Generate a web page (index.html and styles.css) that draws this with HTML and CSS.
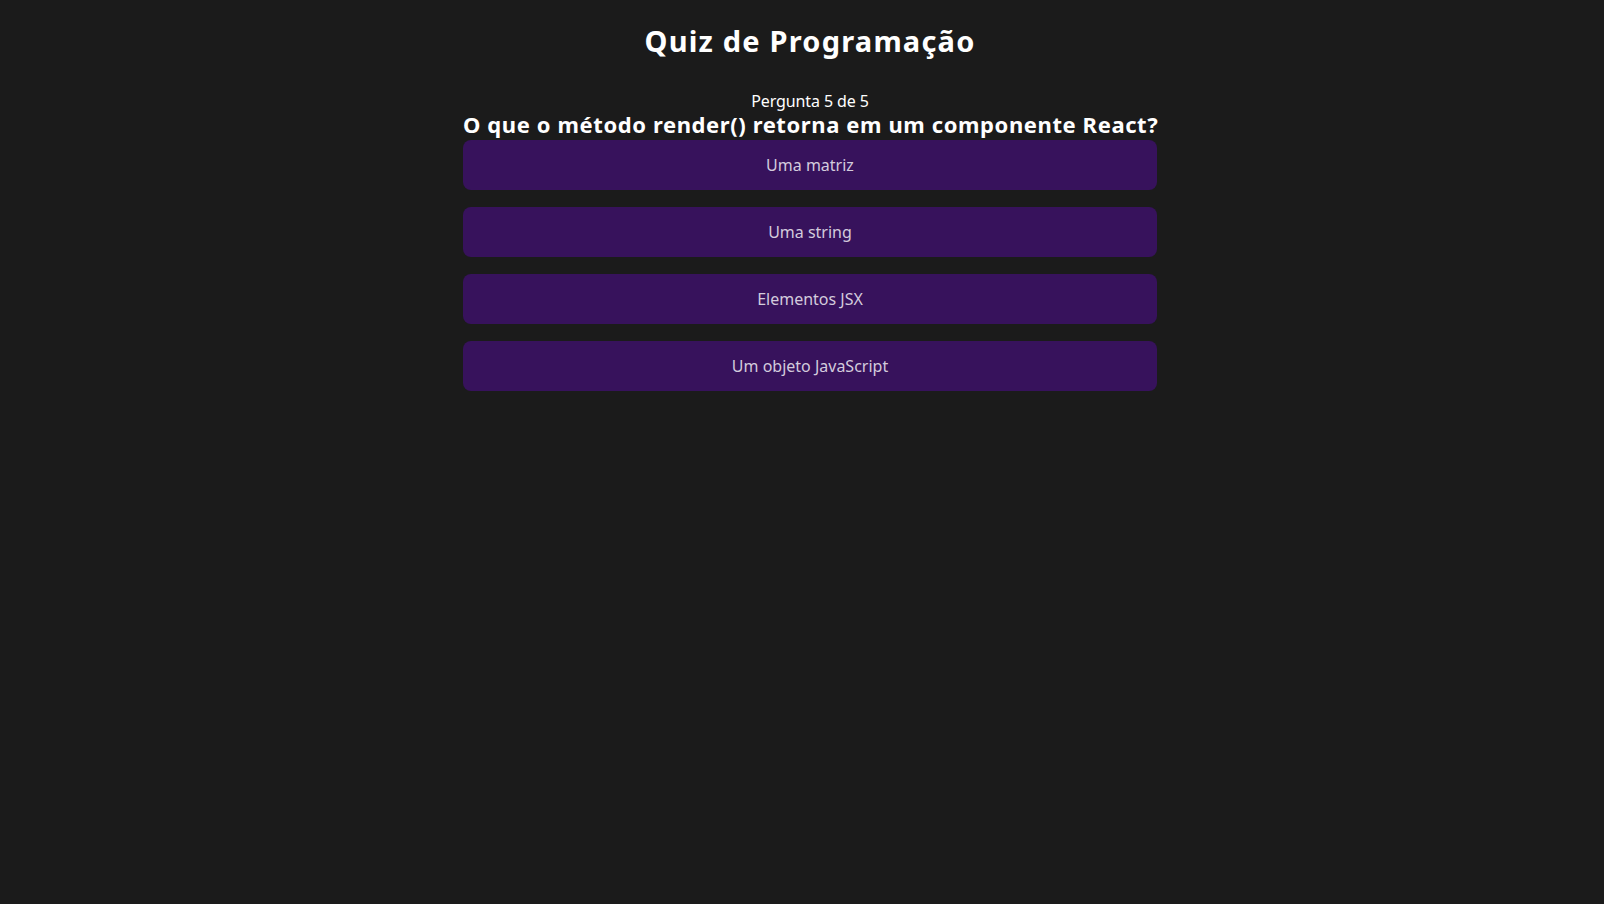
FILE: index.html
```html
<!DOCTYPE html>
<html lang="pt-BR">
<head>
<meta charset="utf-8">
<title>Quiz de Programação</title>
<link rel="stylesheet" href="styles.css">
</head>
<body>
<main class="quiz">
  <h1 class="quiz-title">Quiz de Programação</h1>
  <p class="quiz-counter">Pergunta 5 de 5</p>
  <h2 class="quiz-question">O que o método render() retorna em um componente React?</h2>
  <div class="quiz-options">
    <button class="quiz-option" type="button">Uma matriz</button>
    <button class="quiz-option" type="button">Uma string</button>
    <button class="quiz-option" type="button">Elementos JSX</button>
    <button class="quiz-option" type="button">Um objeto JavaScript</button>
  </div>
</main>
</body>
</html>
```
FILE: styles.css
```css
html, body {
  margin: 0;
  background: #1b1b1b;
}
body {
  padding: 0 0 0 16px;
  font-family: "Noto Sans", Lato, sans-serif;
  color: #ffffff;
  min-height: 904px;
  box-sizing: border-box;
}
.quiz {
  width: 694px;
  margin: 0 auto;
  display: flex;
  flex-direction: column;
  align-items: stretch;
  text-align: center;
}
.quiz-title {
  margin: 24px 0 0;
  font-size: 29px;
  line-height: 34px;
  font-weight: 700;
  letter-spacing: 1.2px;
}
.quiz-counter {
  margin: 33px 0 0;
  font-size: 16px;
  line-height: 20px;
  font-weight: 400;
  letter-spacing: -0.1px;
}
.quiz-question {
  margin: 0;
  font-size: 22px;
  line-height: 26px;
  font-weight: 700;
  letter-spacing: 0.6px;
  white-space: nowrap;
}
.quiz-options {
  margin-top: 3px;
  display: flex;
  flex-direction: column;
  gap: 17px;
}
.quiz-option {
  height: 50px;
  border: none;
  border-radius: 8px;
  background: #37125c;
  color: #d3cbdc;
  font-family: "Noto Sans", Lato, sans-serif;
  font-size: 16px;
  cursor: pointer;
}
```
